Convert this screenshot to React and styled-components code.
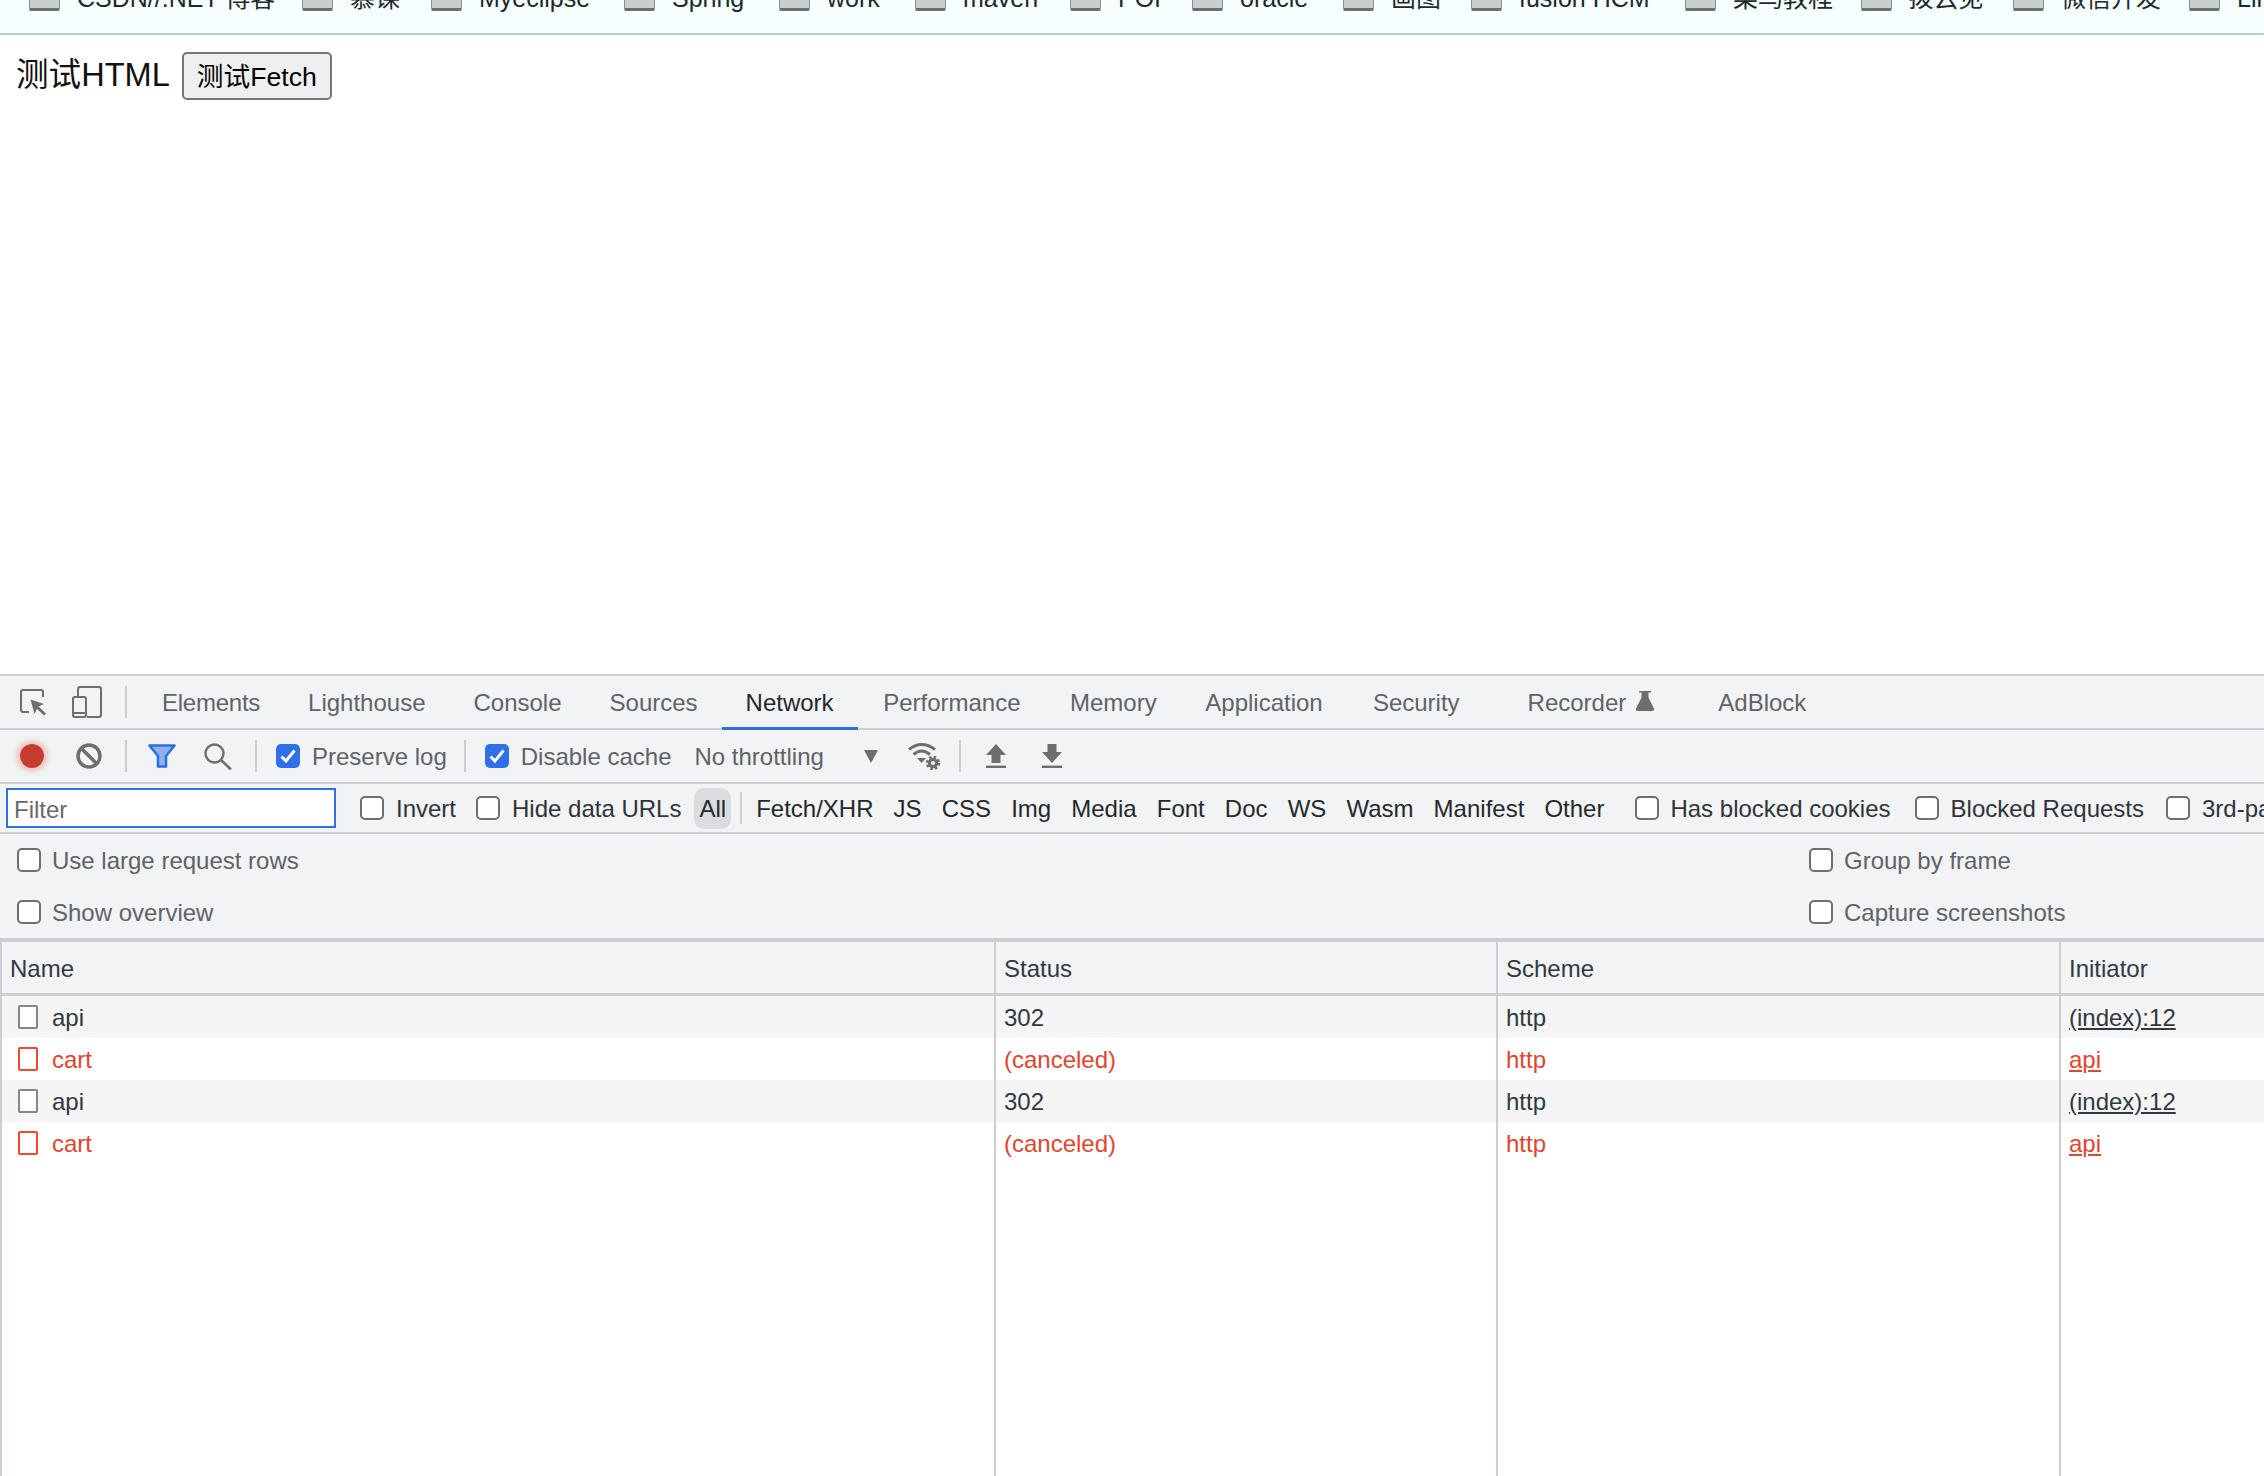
import React from "react";
import styled, { createGlobalStyle } from "styled-components";

const Global = createGlobalStyle`
  html, body { margin: 0; padding: 0; background: #fff; }
  body { font-family: "Liberation Sans", "Noto Sans CJK SC", sans-serif; }
`;

const Page = styled.div`
  width: 2264px; height: 1476px; display: flex; flex-direction: column; overflow: hidden;
`;

/* ---------- browser bookmarks ---------- */
const BookmarkBar = styled.div`
  height: 33px; flex: none; overflow: hidden; background: #f5ffff; border-bottom: 2px solid #bccdcd;
`;
const BookmarkRow = styled.div`
  display: flex; height: 33px; margin-top: -22px; padding-left: 29px; white-space: nowrap;
`;
const Bookmark = styled.div`
  display: flex; align-items: flex-end; gap: 17px; flex: 0 0 ${p => p.$w}px;
`;
const Folder = styled.span`
  width: 31px; height: 20px; flex: none; box-sizing: border-box; background: #c7cfcf;
  border: 1px solid #8a8f8f; border-bottom: 3px solid #6b6f6f; border-radius: 2px;
`;
const BookmarkText = styled.span`
  font-size: 25px; line-height: 26px; color: #1e2a2a;
`;

/* ---------- inspected page ---------- */
const Content = styled.main`
  height: 639px; flex: none; box-sizing: border-box; padding: 17px 12px 0 16px;
  display: flex; align-items: flex-start; gap: 12px; background: #fff;
`;
const Heading = styled.span`
  font-size: 32.6px; line-height: 46px; color: #111;
`;
const FetchButton = styled.button`
  width: 150px; height: 48px; padding: 0 0 3px; box-sizing: border-box; font: inherit; font-size: 26.67px;
  color: #000; background: #efefef; border: 2px solid #767676; border-radius: 5px;
`;

/* ---------- devtools ---------- */
const DevTools = styled.section`
  flex: 1; min-height: 0; display: flex; flex-direction: column; background: #f1f3f4;
  font-size: 24px; color: #5f6368;
`;
const TabBar = styled.div`
  height: 52px; flex: none; display: flex; align-items: center;
  border-top: 2px solid #cacdd1; border-bottom: 2px solid #cacdd1;
`;
const ToolBar = styled.div`
  height: 52px; flex: none; display: flex; align-items: center; border-bottom: 2px solid #cacdd1;
  white-space: nowrap;
`;
const FilterBar = styled.div`
  height: 48px; flex: none; display: flex; align-items: center; overflow: hidden; white-space: nowrap;
  border-bottom: 2px solid #cacdd1; color: #303338;
`;
const Slot = styled.span`
  display: inline-flex; flex: none; margin-left: ${p => p.$ml || 0}px;
`;
const Divider = styled.span`
  width: 2px; height: 32px; flex: none; background: #cacdd1; margin-left: ${p => p.$ml || 0}px;
`;
const Tab = styled.div`
  height: 54px; box-sizing: border-box; padding: 3px 24px 0; display: flex; align-items: center; gap: 10px;
  flex: none; align-self: flex-start; margin-left: ${p => p.$ml || 0}px;
  letter-spacing: ${p => p.$track || 0}px;
  color: ${p => (p.$active ? "#26282b" : "#5f6368")};
  border-bottom: 3px solid ${p => (p.$active ? "#2f6fe0" : "transparent")};
`;
const TabIcon = styled.span`
  display: inline-flex; margin-top: -4px;
`;
const RecordDot = styled.span`
  width: 24px; height: 24px; flex: none; border-radius: 50%; background: #c83c2f;
  box-shadow: 0 0 4px 4px rgba(200, 60, 47, 0.22); margin-left: 20px;
`;
const Label = styled.label`
  display: inline-flex; align-items: center; gap: ${p => p.$gap || 12}px; flex: none;
  margin-left: ${p => p.$ml || 0}px;
`;
const LabelText = styled.span`
  padding-top: 2px;
`;
const Box = styled.span`
  width: 24px; height: 24px; flex: none; box-sizing: border-box; display: inline-flex; align-items: center;
  justify-content: center; border-radius: 5px;
  background: ${p => (p.$checked ? "#2f6fe8" : "#fff")};
  border: ${p => (p.$checked ? "none" : "2px solid #6e6e6e")};
`;
const PlainText = styled.span`
  flex: none; padding-top: 2px; margin-left: ${p => p.$ml || 0}px;
`;
const FilterInput = styled.div`
  width: 330px; height: 40px; flex: none; box-sizing: border-box; margin-left: 6px; padding: 4px 0 0 6px;
  display: flex; align-items: center; background: #fff; border: 2px solid #2f6fe0; color: #66696d;
`;
const TypeAll = styled.span`
  flex: none; height: 41px; box-sizing: border-box; margin-left: 13px; padding: 1px 5px 0; display: flex;
  align-items: center; background: #dadce0; border-radius: 10px; color: #26282b;
`;
const TypeList = styled.div`
  display: flex; gap: 20.1px; flex: none; padding-top: 1px; margin-left: 14px; color: #26282b;
`;
const Settings = styled.div`
  height: 90px; flex: none; padding: 14px 0 0 17px; display: grid;
  grid-template-columns: 1792px 1fr; grid-auto-rows: 24px; row-gap: 28px; border-bottom: 4px solid #cacdd1;
`;
const Table = styled.div`
  flex: 1; min-height: 0; display: flex; flex-direction: column; background: #fff;
`;
const Row = styled.div`
  display: grid; grid-template-columns: 994px 502px 563px 1fr; flex: none;
  height: 42px;
  background: ${p => p.$bg || "transparent"};
  color: ${p => (p.$failed ? "#e0462f" : "#303942")};
`;
const HeaderRow = styled(Row)`
  height: 51px; background: #f1f3f4; border-bottom: 3px solid #cacdd1; color: #303942;
`;
const FillRow = styled(Row)`
  flex: 1; height: auto;
`;
const Cell = styled.div`
  box-sizing: border-box; display: flex; align-items: center; padding: 2px 0 0 8px; gap: 14px;
  border-left: 2px solid #cacdd1; white-space: nowrap; overflow: hidden;
`;
const NameCell = styled(Cell)`
  padding-left: 16px;
`;
const FileIcon = styled.span`
  width: 20px; height: 24px; flex: none; box-sizing: border-box; border-radius: 2px; margin-top: -2px;
  border: 2px solid ${p => (p.$failed ? "#f4472f" : "#80868b")}; background: #fff;
`;
const InitiatorLink = styled.span`
  text-decoration: underline;
`;

/* ---------- icons ---------- */
const G = "#6e6e6e";
const InspectIcon = () => (
  <svg width="26" height="27" viewBox="0 0 26 27">
    <path d="M9 23H3a2 2 0 0 1-2-2V3a2 2 0 0 1 2-2h18a2 2 0 0 1 2 2v5" fill="none" stroke={G} strokeWidth="2" />
    <path d="M10.500 10.500L24 15l-5.500 2.500L26 24.500 24 26.500l-7-6.500-2.500 5z" fill={G} />
  </svg>
);
const DeviceIcon = () => (
  <svg width="30" height="32" viewBox="0 0 30 32">
    <path d="M6 10V3a2 2 0 0 1 2-2h19a2 2 0 0 1 2 2v26a2 2 0 0 1-2 2H15" fill="none" stroke={G} strokeWidth="2" />
    <rect x="1" y="11" width="13" height="20" rx="2" fill="none" stroke={G} strokeWidth="2" />
    <path d="M1 27h13" stroke={G} strokeWidth="2" />
  </svg>
);
const ClearIcon = () => (
  <svg width="26" height="26" viewBox="0 0 26 26">
    <circle cx="13" cy="13" r="11" fill="none" stroke={G} strokeWidth="3.500" />
    <path d="M5.500 5.500l15 15" stroke={G} strokeWidth="3.500" />
  </svg>
);
const FunnelIcon = () => (
  <svg width="28" height="24" viewBox="0 0 28 24">
    <path d="M1.500 1.500h25L18 12v10.500h-8V12z" fill="#8fb2ee" stroke="#2f6fe0" strokeWidth="2.600" strokeLinejoin="round" />
  </svg>
);
const SearchIcon = () => (
  <svg width="28" height="27" viewBox="0 0 28 27">
    <circle cx="10.500" cy="10.500" r="9" fill="none" stroke={G} strokeWidth="2.400" />
    <path d="M17 17l10 9.500" stroke={G} strokeWidth="2.600" />
  </svg>
);
const Caret = () => (
  <svg width="14" height="13" viewBox="0 0 14 13"><path d="M0 0h14L7 13z" fill={G} /></svg>
);
const WifiIcon = () => (
  <svg width="34" height="28" viewBox="0 0 34 28">
    <path d="M1 7.500Q13.500-2.500 27 7.500" fill="none" stroke={G} strokeWidth="3" />
    <path d="M5.500 12.500Q13.500 5.500 22 12.500" fill="none" stroke={G} strokeWidth="3" />
    <path d="M9 16h9l-4.500 5z" fill={G} />
    <circle cx="25" cy="21" r="3.700" fill="none" stroke={G} strokeWidth="3.200" />
    <circle cx="25" cy="21" r="6" fill="none" stroke={G} strokeWidth="2.400" strokeDasharray="2.500 2.200" />
  </svg>
);
const UploadIcon = () => (
  <svg width="20" height="24" viewBox="0 0 20 24">
    <path d="M10 0l10 11h-5.500v8h-9v-8H0z" fill={G} /><rect y="21.600" width="20" height="2.400" fill={G} />
  </svg>
);
const DownloadIcon = () => (
  <svg width="20" height="24" viewBox="0 0 20 24">
    <path d="M5.500 0h9v8H20L10 19 0 8h5.500z" fill={G} /><rect y="21.600" width="20" height="2.400" fill={G} />
  </svg>
);
const FlaskIcon = () => (
  <svg width="18" height="20" viewBox="0 0 18 20">
    <path d="M3 0h12v1.600h-2.500v5L18 17.500q.5 2.500-2 2.500H2q-2.500 0-2-2.500L5.500 6.600v-5H3z" fill={G} />
  </svg>
);
const Check = () => (
  <svg width="16" height="14" viewBox="0 0 16 14">
    <path d="M1.500 7.500l4.500 4.500 8.500-10.500" fill="none" stroke="#fff" strokeWidth="3" />
  </svg>
);

const CheckLabel = ({ checked, ml, gap, children }) => (
  <Label $ml={ml} $gap={gap}>
    <Box $checked={checked}>{checked && <Check />}</Box>
    <LabelText>{children}</LabelText>
  </Label>
);

const bookmarks = [
  ["CSDN//.NET 博客", 273], ["慕课", 129], ["Myeclipse", 193], ["Spring", 155], ["work", 136],
  ["maven", 155], ["POI", 122], ["oracle", 151], ["画图", 128], ["fusion HCM", 214],
  ["菜鸟教程", 175.5], ["拨云见", 152.5], ["微信开发", 176], ["Linux", 80],
];
const tabs = [
  ["Lighthouse", 0], ["Console", 0], ["Sources", 0], ["Network", 0], ["Performance", 1.5],
  ["Memory", 1.5], ["Application", 0.6], ["Security", 2.2],
];
const types = ["Fetch/XHR", "JS", "CSS", "Img", "Media", "Font", "Doc", "WS", "Wasm", "Manifest", "Other"];
const rows = [
  { name: "api", status: "302", initiator: "(index):12" },
  { name: "cart", status: "(canceled)", initiator: "api", failed: true },
  { name: "api", status: "302", initiator: "(index):12" },
  { name: "cart", status: "(canceled)", initiator: "api", failed: true },
];

export default function App() {
  return (
    <Page>
      <Global />
      <BookmarkBar>
        <BookmarkRow>
          {bookmarks.map(([b, w]) => (
            <Bookmark key={b} $w={w}><Folder /><BookmarkText>{b}</BookmarkText></Bookmark>
          ))}
        </BookmarkRow>
      </BookmarkBar>
      <Content>
        <Heading>测试HTML</Heading>
        <FetchButton>测试Fetch</FetchButton>
      </Content>
      <DevTools>
        <TabBar>
          <Slot $ml={20}><InspectIcon /></Slot>
          <Slot $ml={26}><DeviceIcon /></Slot>
          <Divider $ml={23} />
          <Tab $ml={11} $track={-0.25}>Elements</Tab>
          {tabs.map(([t, ml]) => <Tab key={t} $ml={ml} $active={t === "Network"}>{t}</Tab>)}
          <Tab $ml={20}>Recorder <TabIcon><FlaskIcon /></TabIcon></Tab>
          <Tab $ml={16}>AdBlock</Tab>
        </TabBar>
        <ToolBar>
          <RecordDot />
          <Slot $ml={32}><ClearIcon /></Slot>
          <Divider $ml={23} />
          <Slot $ml={21}><FunnelIcon /></Slot>
          <Slot $ml={28}><SearchIcon /></Slot>
          <Divider $ml={23} />
          <CheckLabel checked ml={19}>Preserve log</CheckLabel>
          <Divider $ml={17} />
          <CheckLabel checked ml={19}>Disable cache</CheckLabel>
          <PlainText $ml={23}>No throttling</PlainText>
          <Slot $ml={40}><Caret /></Slot>
          <Slot $ml={30}><WifiIcon /></Slot>
          <Divider $ml={17} />
          <Slot $ml={25}><UploadIcon /></Slot>
          <Slot $ml={36}><DownloadIcon /></Slot>
        </ToolBar>
        <FilterBar>
          <FilterInput>Filter</FilterInput>
          <CheckLabel ml={24}>Invert</CheckLabel>
          <CheckLabel ml={20}>Hide data URLs</CheckLabel>
          <TypeAll>All</TypeAll>
          <Divider $ml={9} />
          <TypeList>{types.map(t => <span key={t}>{t}</span>)}</TypeList>
          <CheckLabel ml={31} gap={11}>Has blocked cookies</CheckLabel>
          <CheckLabel ml={24}>Blocked Requests</CheckLabel>
          <CheckLabel ml={22}>3rd-party requests</CheckLabel>
        </FilterBar>
        <Settings>
          <CheckLabel gap={11}>Use large request rows</CheckLabel>
          <CheckLabel gap={11}>Group by frame</CheckLabel>
          <CheckLabel gap={11}>Show overview</CheckLabel>
          <CheckLabel gap={11}>Capture screenshots</CheckLabel>
        </Settings>
        <Table>
          <HeaderRow>
            <Cell>Name</Cell><Cell>Status</Cell><Cell>Scheme</Cell><Cell>Initiator</Cell>
          </HeaderRow>
          {rows.map((r, i) => (
            <Row key={i} $failed={r.failed} $bg={i % 2 === 0 ? "#f5f5f5" : "#fff"}>
              <NameCell><FileIcon $failed={r.failed} />{r.name}</NameCell>
              <Cell>{r.status}</Cell>
              <Cell>http</Cell>
              <Cell><InitiatorLink>{r.initiator}</InitiatorLink></Cell>
            </Row>
          ))}
          <FillRow><Cell /><Cell /><Cell /><Cell /></FillRow>
        </Table>
      </DevTools>
    </Page>
  );
}
